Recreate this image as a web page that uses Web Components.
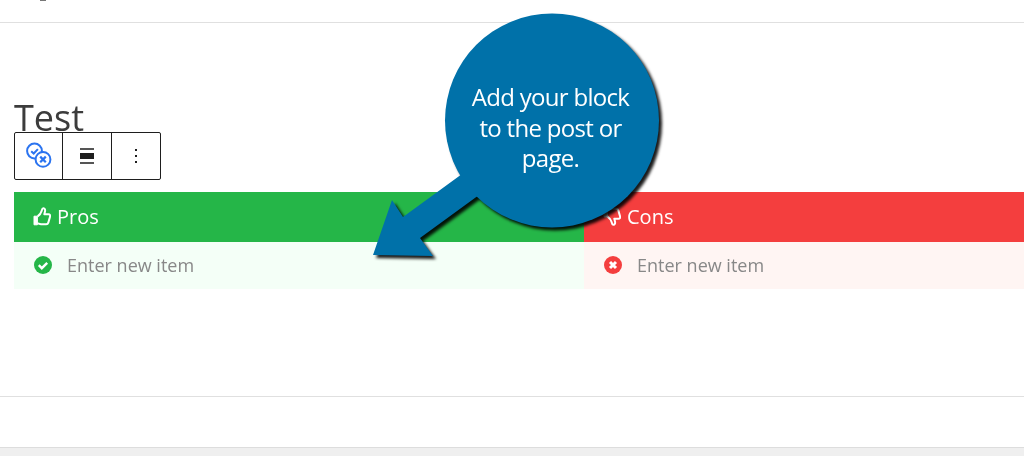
<!DOCTYPE html>
<html>
<head>
<meta charset="utf-8">
<title>Test</title>
<style>
    html, body { margin: 0; padding: 0; background: #fff; }
    body { font-family: "Open Sans", "Liberation Sans", sans-serif; width: 1024px; height: 456px; overflow: hidden; position: relative; }
</style>
</head>
<body>
<editor-top></editor-top>
<editor-canvas>
    <h1 slot="title">Test</h1>
    <block-toolbar slot="toolbar"></block-toolbar>
    <pros-cons slot="block"></pros-cons>
</editor-canvas>
<editor-footer></editor-footer>
<help-callout>Add your block<br>to the post or<br>page.</help-callout>

<script>
// top bar, only the bottom of the logo shows
class EditorTop extends HTMLElement {
    constructor() {
        super();
        this.attachShadow({ mode: 'open' });
        this.shadowRoot.innerHTML = `
            <style>
                :host { display: block; height: 22px; border-bottom: 1px solid #e0e0e0; }
                i { display: block; width: 6px; height: 1px; margin-left: 40px; background: #777; }
            </style>
            <i></i>
        `;
    }
}

class EditorCanvas extends HTMLElement {
    constructor() {
        super();
        this.attachShadow({ mode: 'open' });
        this.shadowRoot.innerHTML = `
            <style>
                :host { display: block; height: 374px; padding-left: 14px; box-sizing: border-box; border-bottom: 1px solid #e0e0e0; }
                .head { height: 109px; display: flex; flex-direction: column; justify-content: flex-end; }
                /* title runs into the toolbar a little in the original */
                ::slotted(h1) { margin: 0 0 -10px; font: 400 36px/48px "Open Sans", sans-serif; color: #3c3c3c; will-change: transform; }
            </style>
            <div class="head"><slot name="title"></slot></div>
            <slot name="toolbar"></slot>
            <slot name="block"></slot>
        `;
    }
}

class BlockToolbar extends HTMLElement {
    constructor() {
        super();
        this.attachShadow({ mode: 'open' });
        this.shadowRoot.innerHTML = `
            <style>
                :host { display: grid; grid-template-columns: 47px 49px 49px; width: 147px; height: 48px; box-sizing: border-box; border: 1px solid #1e1e1e; border-radius: 2px; background: #fff; position: relative; }
                div { display: flex; align-items: center; justify-content: center; }
                div + div { border-left: 1px solid #1e1e1e; }
                svg { display: block; }
            </style>
            <div>
                <svg width="30" height="30" viewBox="0 0 30 30" fill="none" stroke="#2b74f0" stroke-width="2">
                    <circle cx="10.5" cy="10" r="7.4"/>
                    <path d="M7.2 10.2l2.5 2.3 4.2-4.4"/>
                    <circle cx="19" cy="18.4" r="7.4" fill="#fff"/>
                    <path d="M16.2 15.6l5.6 5.6M21.8 15.6l-5.6 5.6" stroke-width="2.2"/>
                </svg>
            </div>
            <div>
                <svg width="16" height="18" viewBox="0 0 16 18">
                    <rect x="1" y="1" width="14" height="2" fill="#555"/>
                    <rect x="1" y="6" width="14" height="6" fill="#1e1e1e"/>
                    <rect x="1" y="15" width="14" height="2" fill="#555"/>
                </svg>
            </div>
            <div>
                <svg width="4" height="16" viewBox="0 0 4 16" fill="#1e1e1e">
                    <rect x="1" y="1" width="2" height="2"/>
                    <rect x="1" y="7" width="2" height="2"/>
                    <rect x="1" y="13" width="2" height="2"/>
                </svg>
            </div>
        `;
    }
}

const thumb = `<svg class="thumb" width="18" height="19" viewBox="0 0 18 19" fill="none" stroke="#fff" stroke-width="2" stroke-linejoin="round">
    <path d="M1 9.2h3.4v8.6H1z" fill="#fff" stroke-width="1"/>
    <path d="M4.6 9.4c2-1.4 3.4-3.2 4-5.4.3-1.2.4-2.6 1.6-2.8 1.6-.2 2.2 1.6 1.8 3.4l-.7 2.6h4.2c1.4 0 2 1.2 1.6 2.4l-1.8 6c-.3 1-1 1.6-2.1 1.6H8c-1.4 0-2.3-.6-3.4-.9"/>
</svg>`;

class ProsCons extends HTMLElement {
    constructor() {
        super();
        this.attachShadow({ mode: 'open' });
        this.shadowRoot.innerHTML = `
            <style>
                :host { display: grid; grid-template-columns: 570px 1fr; margin-top: 12px; font-family: "Open Sans", sans-serif; }
                .head { height: 50px; display: flex; align-items: center; gap: 6px; padding-left: 19px; padding-bottom: 1px; box-sizing: border-box; color: #fff; font-size: 20px; font-weight: 500; }
                .item { height: 47px; display: flex; align-items: center; gap: 15px; padding-left: 20px; padding-bottom: 1px; box-sizing: border-box; color: #888; font-size: 18px; }
                .pro .head { background: #25b648; }
                .pro .item { background: #f4fff7; }
                .con .head { background: #f43e3e; }
                .con .item { background: #fff5f3; }
                .con .thumb { transform: rotate(180deg) scaleX(-1); }
                span { will-change: transform; }
                svg { display: block; flex: none; }
            </style>
            <div class="pro">
                <div class="head">${thumb}<span>Pros</span></div>
                <div class="item">
                    <svg width="18" height="18" viewBox="0 0 18 18">
                        <circle cx="9" cy="9" r="9" fill="#25b648"/>
                        <path d="M4.8 9.2l3 3 5.4-5.4" fill="none" stroke="#fff" stroke-width="2.4"/>
                    </svg>
                    <span>Enter new item</span>
                </div>
            </div>
            <div class="con">
                <div class="head">${thumb}<span>Cons</span></div>
                <div class="item">
                    <svg width="18" height="18" viewBox="0 0 18 18">
                        <circle cx="9" cy="9" r="9" fill="#f43e3e"/>
                        <path d="M6 6l6 6M12 6l-6 6" fill="none" stroke="#fff" stroke-width="3"/>
                    </svg>
                    <span>Enter new item</span>
                </div>
            </div>
        `;
    }
}

class EditorFooter extends HTMLElement {
    constructor() {
        super();
        this.attachShadow({ mode: 'open' });
        this.shadowRoot.innerHTML = `
            <style>
                :host { display: block; margin-top: 50px; height: 9px; box-sizing: border-box; border-top: 1px solid #ddd; background: #efefef; }
            </style>
        `;
    }
}

// the annotation drawn over the screenshot
class HelpCallout extends HTMLElement {
    constructor() {
        super();
        this.attachShadow({ mode: 'open' });
        this.shadowRoot.innerHTML = `
            <style>
                :host { position: absolute; left: 0; top: 0; width: 1024px; height: 456px; pointer-events: none; }
                svg { position: absolute; left: 0; top: 0; filter: drop-shadow(3px 3px 1.5px rgba(0,0,0,.9)); }
                p { position: absolute; left: 445px; top: 82px; width: 211px; margin: 0; text-align: center; color: #fff; will-change: transform;
                    font: 400 24px/30.5px "Open Sans", sans-serif; letter-spacing: -.7px; }
            </style>
            <svg width="1024" height="456" viewBox="0 0 1024 456" fill="#0071a9">
                <circle cx="552" cy="120.5" r="107"/>
                <path d="M462 174L403 217 392 200 373 255 433 256 420 238 479 195z"/>
            </svg>
            <p><slot></slot></p>
        `;
    }
}

customElements.define('editor-top', EditorTop);
customElements.define('editor-canvas', EditorCanvas);
customElements.define('block-toolbar', BlockToolbar);
customElements.define('pros-cons', ProsCons);
customElements.define('editor-footer', EditorFooter);
customElements.define('help-callout', HelpCallout);
</script>
</body>
</html>
